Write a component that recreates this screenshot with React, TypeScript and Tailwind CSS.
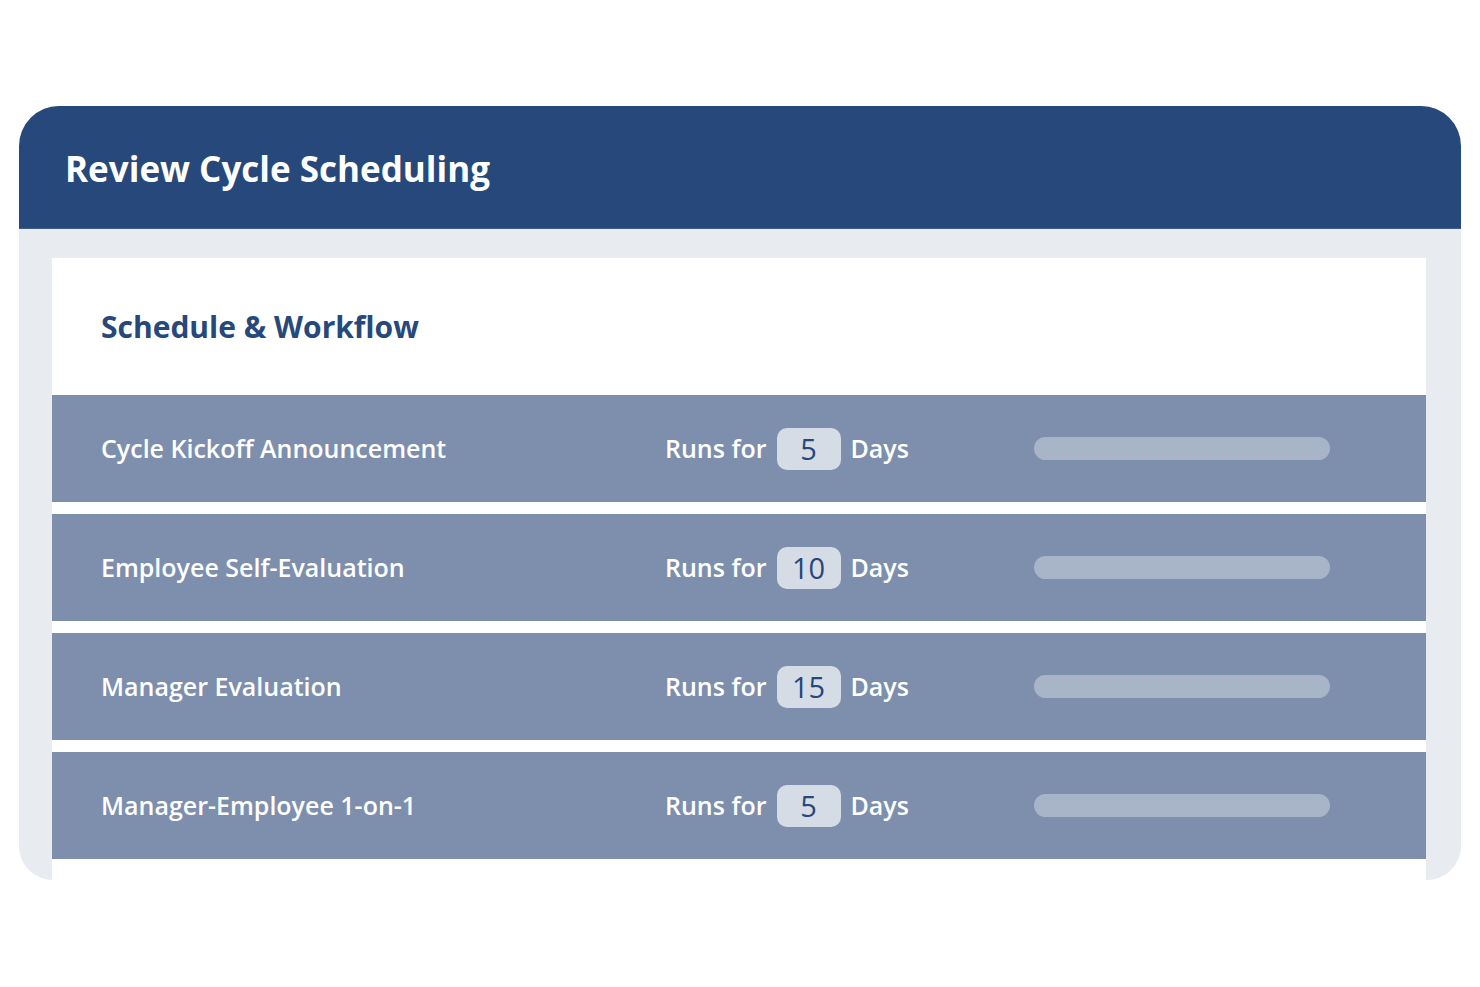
const steps = [
  { name: "Cycle Kickoff Announcement", days: 5 },
  { name: "Employee Self-Evaluation", days: 10 },
  { name: "Manager Evaluation", days: 15 },
  { name: "Manager-Employee 1-on-1", days: 5 },
];

function StepRow({ name, days }: { name: string; days: number }) {
  return (
    <div className="grid h-[107px] grid-cols-[564px_369px_296px] items-center bg-[#7d8fad] pl-[49px] text-white">
      <span className="text-[25px] font-semibold">{name}</span>
      <div className="flex items-center text-[25px] font-semibold">
        <span>Runs for</span>
        <span className="ml-[10px] mr-[10px] flex h-[42px] w-[64px] items-center justify-center rounded-[10px] bg-[#d5dce6] text-[29px] font-normal text-[#27487a]">
          {days}
        </span>
        <span>Days</span>
      </div>
      <div className="h-[23px] rounded-full bg-[#a8b4c8]" />
    </div>
  );
}

export default function App() {
  return (
    <div
      className="min-h-screen bg-white pt-[106px] pl-[19px] pr-[19px]"
      style={{ fontFamily: '"Open Sans", "Liberation Sans", sans-serif' }}
    >
      <div className="h-[774px] overflow-hidden rounded-[40px] rounded-b-[34px] bg-[#e8ebf0]">
        <header className="flex h-[123px] items-center border-b border-[#3a5a8a] bg-[#27487a] pl-[46px] pt-[4px]">
          <h1 className="text-[35px] font-bold text-white">Review Cycle Scheduling</h1>
        </header>
        <div className="pt-[29px] pl-[33px] pr-[35px] h-full">
          <div className="h-full bg-white">
            <div className="flex h-[137px] items-center pl-[49px]">
              <h2 className="text-[30px] font-bold text-[#27487a]">Schedule &amp; Workflow</h2>
            </div>
            <div className="flex flex-col gap-[12px]">
              {steps.map((s) => (
                <StepRow key={s.name} name={s.name} days={s.days} />
              ))}
            </div>
          </div>
        </div>
      </div>
    </div>
  );
}
